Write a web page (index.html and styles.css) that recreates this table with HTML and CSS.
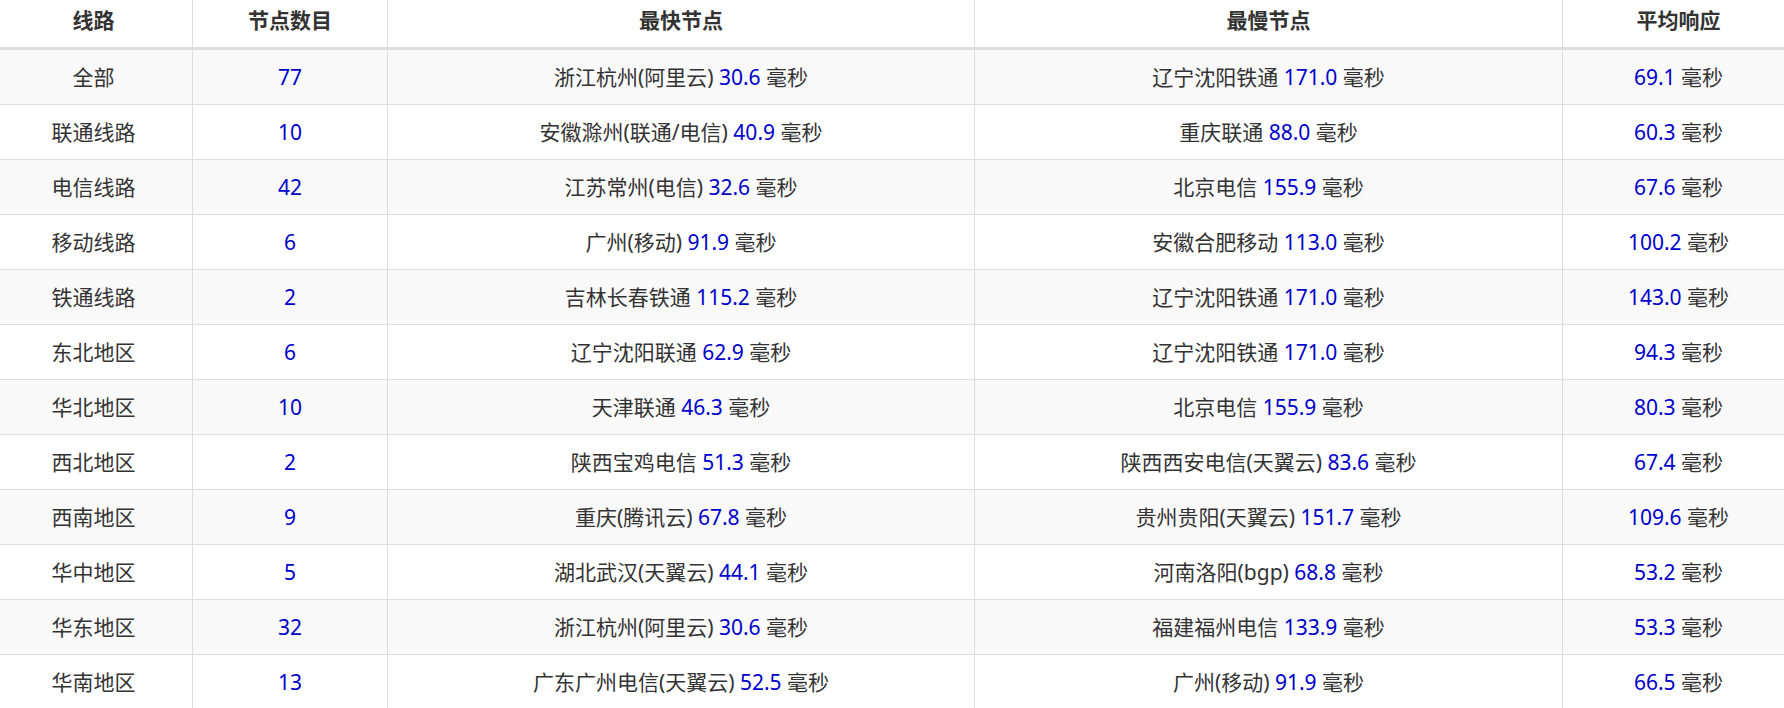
FILE: index.html
```html
<!DOCTYPE html>
<html lang="zh-CN">
<head>
<meta charset="utf-8">
<title>线路测速</title>
<link rel="stylesheet" href="styles.css">
</head>
<body>
<table class="speed-table">
  <colgroup>
    <col class="c1"><col class="c2"><col class="c3"><col class="c4"><col class="c5">
  </colgroup>
  <thead>
    <tr><th>线路</th><th>节点数目</th><th>最快节点</th><th>最慢节点</th><th>平均响应</th></tr>
  </thead>
  <tbody>
    <tr><td>全部</td><td><span class="num">77</span></td><td>浙江杭州(阿里云) <span class="num">30.6</span> 毫秒</td><td>辽宁沈阳铁通 <span class="num">171.0</span> 毫秒</td><td><span class="num">69.1</span> 毫秒</td></tr>
    <tr><td>联通线路</td><td><span class="num">10</span></td><td>安徽滁州(联通/电信) <span class="num">40.9</span> 毫秒</td><td>重庆联通 <span class="num">88.0</span> 毫秒</td><td><span class="num">60.3</span> 毫秒</td></tr>
    <tr><td>电信线路</td><td><span class="num">42</span></td><td>江苏常州(电信) <span class="num">32.6</span> 毫秒</td><td>北京电信 <span class="num">155.9</span> 毫秒</td><td><span class="num">67.6</span> 毫秒</td></tr>
    <tr><td>移动线路</td><td><span class="num">6</span></td><td>广州(移动) <span class="num">91.9</span> 毫秒</td><td>安徽合肥移动 <span class="num">113.0</span> 毫秒</td><td><span class="num">100.2</span> 毫秒</td></tr>
    <tr><td>铁通线路</td><td><span class="num">2</span></td><td>吉林长春铁通 <span class="num">115.2</span> 毫秒</td><td>辽宁沈阳铁通 <span class="num">171.0</span> 毫秒</td><td><span class="num">143.0</span> 毫秒</td></tr>
    <tr><td>东北地区</td><td><span class="num">6</span></td><td>辽宁沈阳联通 <span class="num">62.9</span> 毫秒</td><td>辽宁沈阳铁通 <span class="num">171.0</span> 毫秒</td><td><span class="num">94.3</span> 毫秒</td></tr>
    <tr><td>华北地区</td><td><span class="num">10</span></td><td>天津联通 <span class="num">46.3</span> 毫秒</td><td>北京电信 <span class="num">155.9</span> 毫秒</td><td><span class="num">80.3</span> 毫秒</td></tr>
    <tr><td>西北地区</td><td><span class="num">2</span></td><td>陕西宝鸡电信 <span class="num">51.3</span> 毫秒</td><td>陕西西安电信(天翼云) <span class="num">83.6</span> 毫秒</td><td><span class="num">67.4</span> 毫秒</td></tr>
    <tr><td>西南地区</td><td><span class="num">9</span></td><td>重庆(腾讯云) <span class="num">67.8</span> 毫秒</td><td>贵州贵阳(天翼云) <span class="num">151.7</span> 毫秒</td><td><span class="num">109.6</span> 毫秒</td></tr>
    <tr><td>华中地区</td><td><span class="num">5</span></td><td>湖北武汉(天翼云) <span class="num">44.1</span> 毫秒</td><td>河南洛阳(bgp) <span class="num">68.8</span> 毫秒</td><td><span class="num">53.2</span> 毫秒</td></tr>
    <tr><td>华东地区</td><td><span class="num">32</span></td><td>浙江杭州(阿里云) <span class="num">30.6</span> 毫秒</td><td>福建福州电信 <span class="num">133.9</span> 毫秒</td><td><span class="num">53.3</span> 毫秒</td></tr>
    <tr><td>华南地区</td><td><span class="num">13</span></td><td>广东广州电信(天翼云) <span class="num">52.5</span> 毫秒</td><td>广州(移动) <span class="num">91.9</span> 毫秒</td><td><span class="num">66.5</span> 毫秒</td></tr>
  </tbody>
</table>
</body>
</html>
```
FILE: styles.css
```css
html, body {
  margin: 0;
  padding: 0;
  background: #fff;
  overflow: hidden;
}
body {
  font-family: "Noto Sans", "Noto Sans CJK SC", sans-serif;
  font-size: 21px;
  color: #333;
}
.speed-table {
  table-layout: fixed;
  width: 1799px;
  margin-left: -5px;
  border-collapse: separate;
  border-spacing: 0;
}
.c1 { width: 197px; }
.c2 { width: 195px; }
.c3 { width: 587px; }
.c4 { width: 588px; }
.c5 { width: 232px; }
.speed-table th,
.speed-table td {
  box-sizing: border-box;
  text-align: center;
  line-height: 30px;
  white-space: nowrap;
  overflow: hidden;
}
.speed-table th {
  font-weight: bold;
  padding: 5px 12px 12px;
  border-bottom: 3px solid #ddd;
}
.speed-table td {
  padding: 12px;
  border-bottom: 1px solid #ddd;
}
.speed-table th + th,
.speed-table td + td {
  border-left: 1px solid #ddd;
}
.speed-table tbody tr:nth-child(odd) td {
  background: #f9f9f9;
}
.num {
  color: #0000cc;
}
```
